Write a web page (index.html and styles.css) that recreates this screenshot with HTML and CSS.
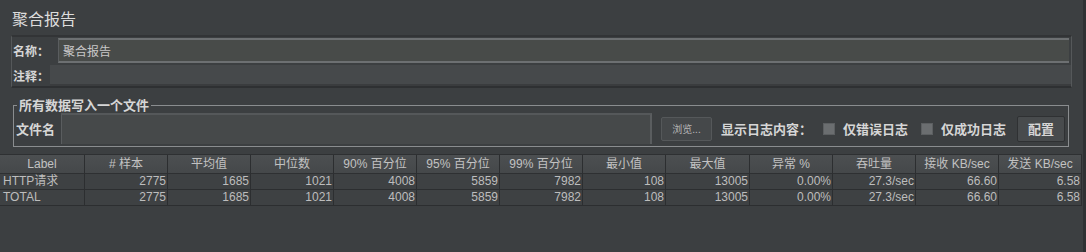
FILE: index.html
```html
<!DOCTYPE html>
<html lang="zh">
<head>
<meta charset="utf-8">
<link rel="stylesheet" href="styles.css">
</head>
<body>
<div class="page">
  <div class="main">
    <div class="title">聚合报告</div>
    <div class="name-panel">
      <div class="field-row name-row">
        <span class="lbl">名称：</span>
        <div class="input name-input">聚合报告</div>
      </div>
      <div class="field-row comment-row">
        <span class="lbl">注释：</span>
        <div class="input comment-input"></div>
      </div>
    </div>
    <fieldset class="file-box">
      <legend>所有数据写入一个文件</legend>
      <div class="file-row">
        <span class="lbl file-lbl">文件名</span>
        <div class="input file-input"></div>
        <div class="btn browse">浏览...</div>
        <span class="lbl log-lbl">显示日志内容：</span>
        <span class="check"></span><span class="lbl chk-lbl">仅错误日志</span>
        <span class="check"></span><span class="lbl chk-lbl">仅成功日志</span>
        <div class="btn config">配置</div>
      </div>
    </fieldset>
    <div class="table">
      <div class="row head">
        <div>Label</div><div># 样本</div><div>平均值</div><div>中位数</div><div>90% 百分位</div><div>95% 百分位</div><div>99% 百分位</div><div>最小值</div><div>最大值</div><div>异常 %</div><div>吞吐量</div><div>接收 KB/sec</div><div>发送 KB/sec</div>
      </div>
      <div class="row data">
        <div>HTTP请求</div><div>2775</div><div>1685</div><div>1021</div><div>4008</div><div>5859</div><div>7982</div><div>108</div><div>13005</div><div>0.00%</div><div>27.3/sec</div><div>66.60</div><div>6.58</div>
      </div>
      <div class="row data">
        <div>TOTAL</div><div>2775</div><div>1685</div><div>1021</div><div>4008</div><div>5859</div><div>7982</div><div>108</div><div>13005</div><div>0.00%</div><div>27.3/sec</div><div>66.60</div><div>6.58</div>
      </div>
    </div>
  </div>
</div>
</body>
</html>
```

FILE: styles.css
```css
* { box-sizing: border-box; }
html, body {
  margin: 0;
  padding: 0;
  background: #3c3f41;
  width: 1086px;
  height: 252px;
  overflow: hidden;
}
body {
  font-family: "Liberation Sans", "Noto Sans CJK SC", sans-serif;
  color: #bbbbbb;
  font-size: 12px;
}
.page {
  width: 1086px;
  height: 252px;
  border-right: 3px solid #2f3133;
  padding-right: 1px;
}
.main {
  height: 252px;
  display: flex;
  flex-direction: column;
}
.title {
  font-family: "Noto Sans CJK SC", sans-serif;
  font-size: 16px;
  line-height: 20px;
  color: #dcdcdc;
  padding: 8px 0 0 12px;
  height: 35px;
}
.name-panel {
  margin: 0 10px 0 11px;
  border-top: 2px solid #323436;
  border-left: 1px solid #55585a;
  border-right: 1px solid #55585a;
  border-bottom: 2px solid #2e3032;
  display: flex;
  flex-direction: column;
  gap: 2px;
  padding-top: 1px;
}
.field-row {
  display: flex;
  align-items: center;
}
.lbl {
  font-family: "Noto Sans CJK SC", sans-serif;
  font-weight: bold;
  font-size: 12px;
  color: #d6d6d6;
  white-space: nowrap;
}
.name-row { height: 25px; }
.name-row .lbl { width: 46px; padding-left: 1px; }
.input {
  flex: 1;
  background: #46494a;
  font-family: "Noto Sans CJK SC", sans-serif;
  font-size: 12px;
  color: #c8c8c8;
}
.name-input {
  height: 25px;
  border-top: 2px solid #6d7072;
  border-bottom: 2px solid #6d7072;
  border-left: 1px solid #5a5d5f;
  line-height: 21px;
  padding-left: 4px;
  background: #484b49;
  margin-right: 2px;
}
.comment-row { height: 21px; }
.comment-row .lbl { width: 38px; padding-left: 1px; }
.comment-input {
  height: 21px;
  background: #46494b;
  border-bottom: 2px solid #3a3c3e;
}
.file-box {
  margin: 10px 13px 0 13px;
  padding: 6px 0 2px 2px;
  border: 1px solid #8a8d8f;
  height: 49px;
  min-width: 0;
}
.file-box legend {
  font-family: "Noto Sans CJK SC", sans-serif;
  font-weight: bold;
  font-size: 13px;
  color: #d6d6d6;
  padding: 0 2px 0 2px;
  margin-left: 1px;
  line-height: 14px;
}
.file-row {
  display: flex;
  align-items: center;
  height: 31px;
  margin-top: -5px;
}
.file-lbl { font-size: 13px; width: 45px; }
.file-input {
  flex: none;
  width: 591px;
  height: 31px;
  background: #46494a;
  border-top: 2px solid #55585a;
  border-left: 1px solid #5a5d5f;
  border-right: 2px solid #5a5d5f;
}
.btn {
  font-family: "Noto Sans CJK SC", sans-serif;
  background: #45484a;
  border: 1px solid #55585a;
  border-radius: 2px;
  display: flex;
  align-items: center;
  justify-content: center;
}
.browse {
  margin-left: 9px;
  width: 51px;
  height: 24px;
  font-size: 10px;
  color: #b5b5b5;
}
.log-lbl { font-size: 13px; margin-left: 9px; width: 96px; }
.check {
  width: 12px;
  height: 12px;
  background: #6b6e70;
  border: 1px solid #5c5f61;
  margin-left: 6px;
  margin-right: 8px;
}
.chk-lbl { font-size: 13px; width: 65px; }
.chk-lbl + .check { margin-left: 13px; }
.config {
  margin-left: 11px;
  width: 48px;
  height: 26px;
  font-size: 13px;
  font-weight: bold;
  color: #d6d6d6;
  background: #484b4d;
  border: 1px solid #2f3133;
}
.table {
  margin-top: 7px;
  width: 1082px;
  border-top: 1px solid #2e3032;
}
.row {
  display: grid;
  grid-template-columns: 85px 83px 83px 83px 83px 83px 83px 83px 84px 83px 83px 83px 83px;
}
.row > div {
  border-right: 1px solid #2c2e30;
  white-space: nowrap;
  overflow: hidden;
  font-family: "Liberation Sans", "Noto Sans CJK SC", sans-serif;
  font-size: 12px;
}
.head > div {
  height: 19px;
  line-height: 18px;
  text-align: center;
  color: #c2c2c2;
  background: linear-gradient(#4c4f51, #45484a);
  border-bottom: 1px solid #2e3032;
}
.data > div {
  height: 16px;
  line-height: 15px;
  text-align: right;
  padding-right: 1px;
  color: #bdbdbd;
  background: #3e4143;
  border-bottom: 1px solid #2c2e30;
}
.data > div:first-child {
  text-align: left;
  padding-left: 3px;
}
```
